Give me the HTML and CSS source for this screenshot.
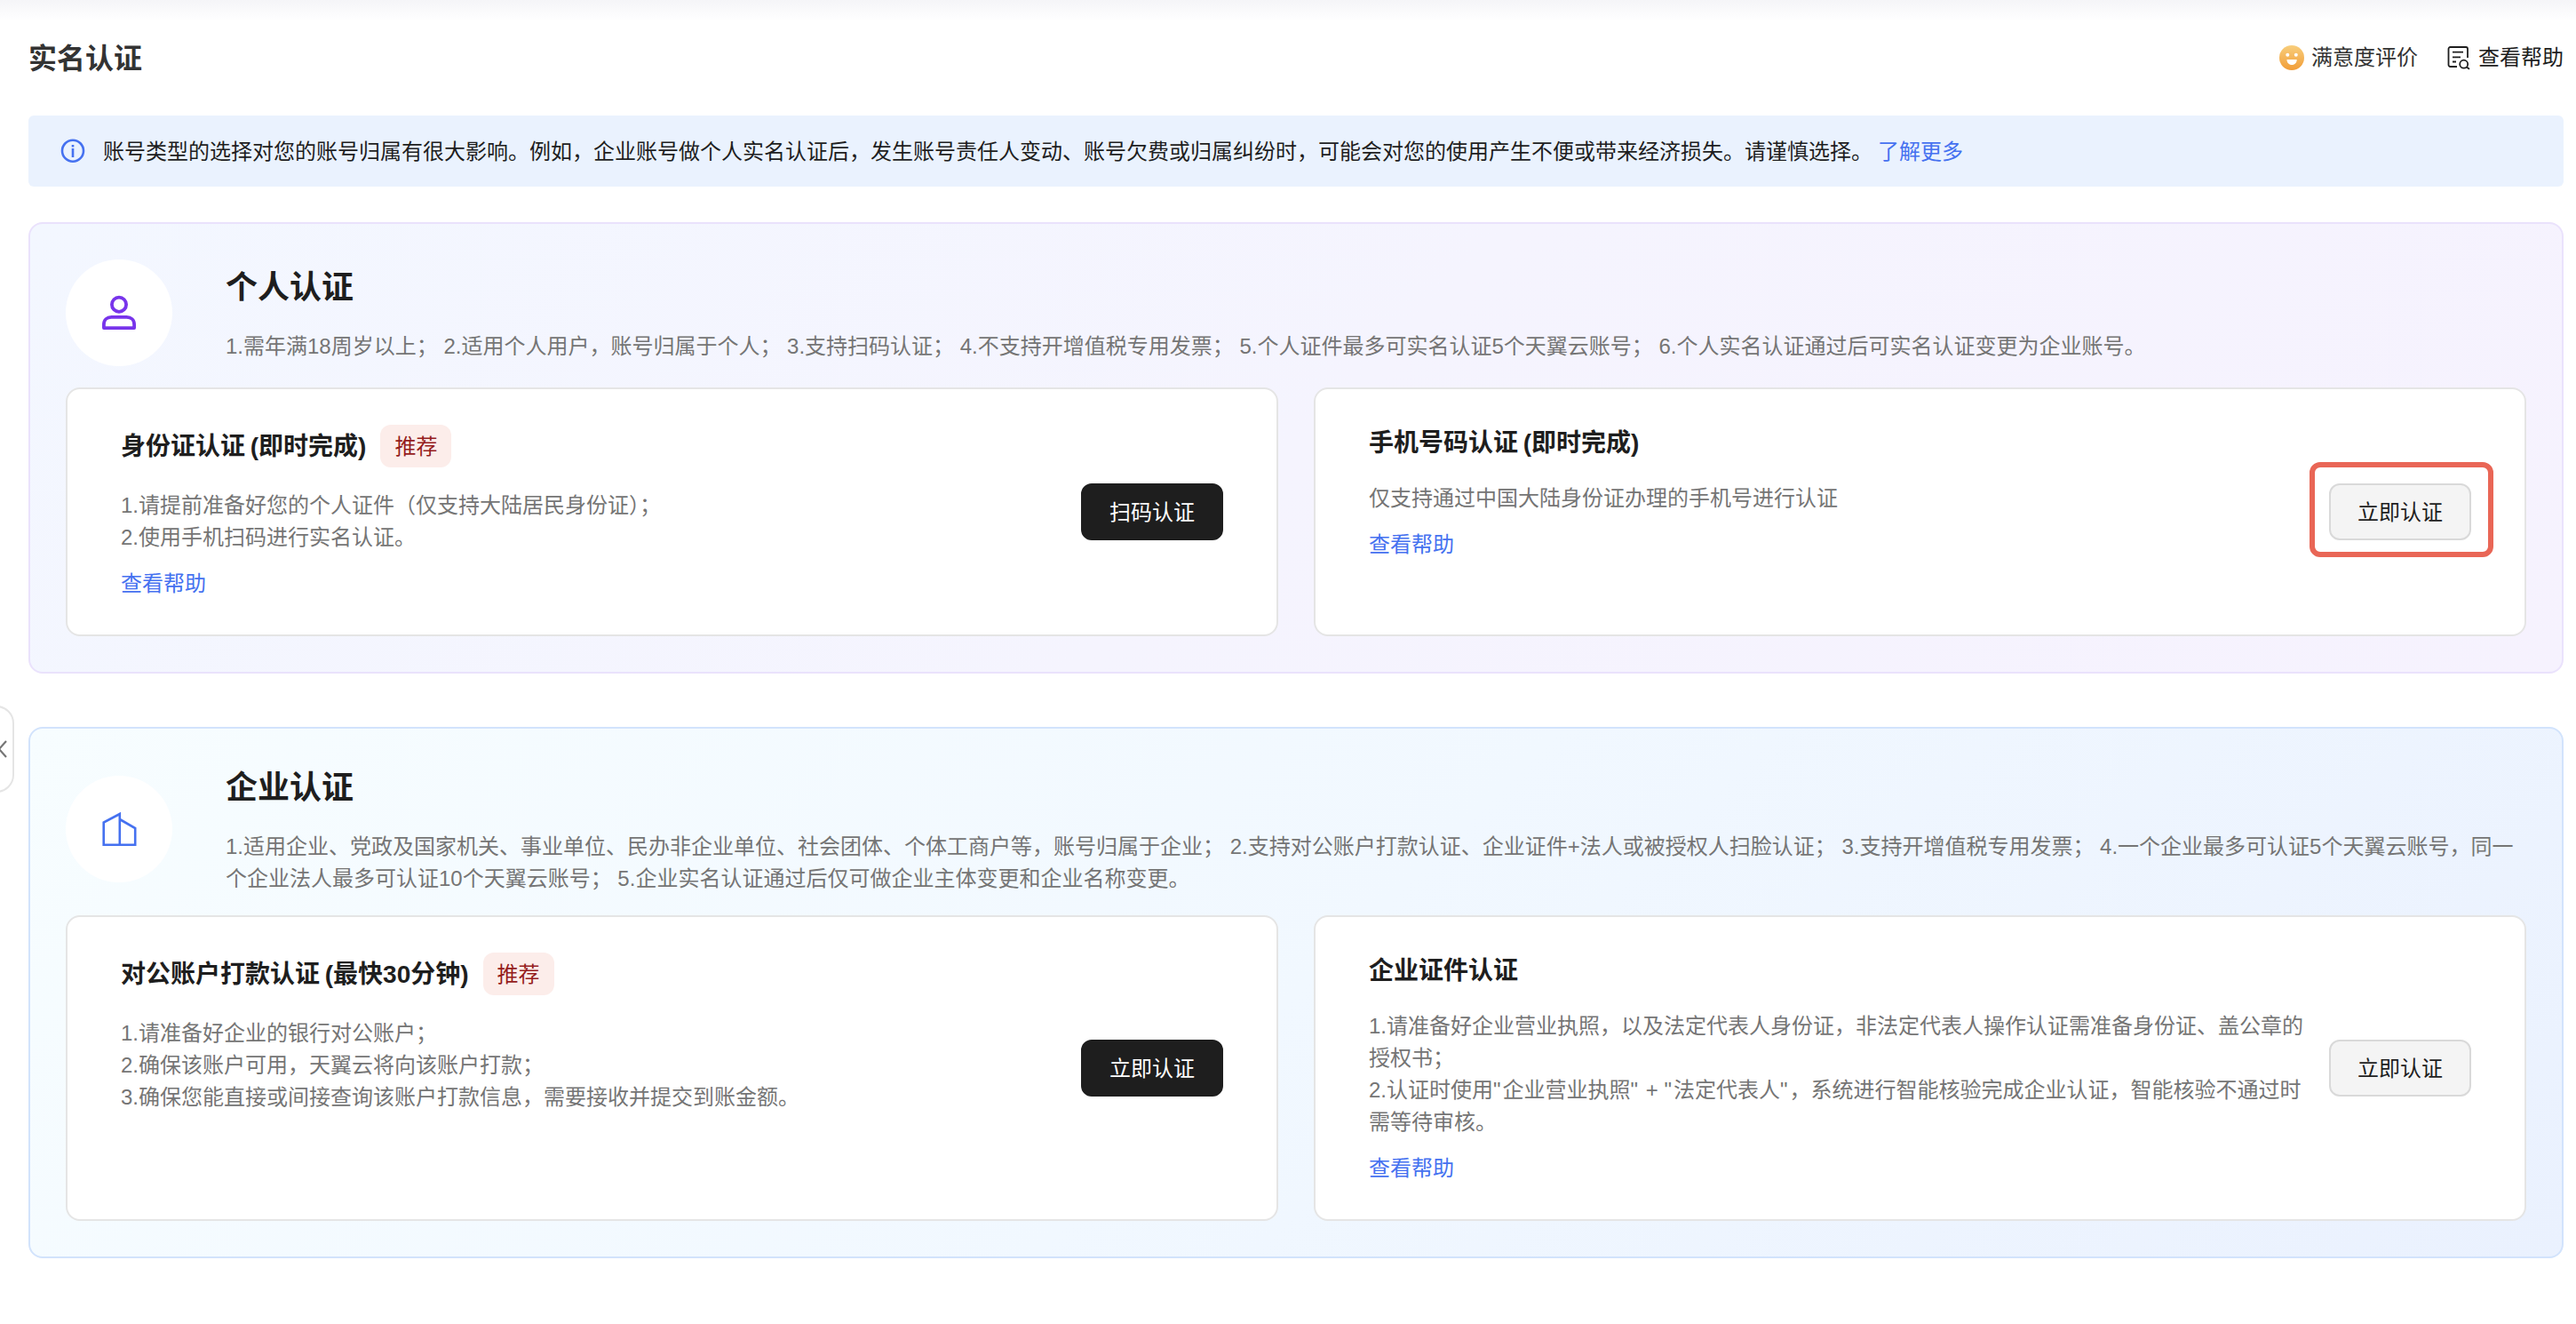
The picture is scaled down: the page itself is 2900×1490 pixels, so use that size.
FILE: index.html
```html
<!DOCTYPE html>
<html lang="zh-CN">
<head>
    <meta charset="UTF-8">
    <meta name="viewport" content="width=device-width, initial-scale=1.0">
    <title>实名认证</title>
    <link rel="stylesheet" href="styles.css">
</head>
<body>
    <!-- 侧边栏收起按钮 -->
    <div class="collapse-btn">
        <svg width="10" height="20" viewBox="0 0 10 20"><path d="M9 1L1 10l8 9"/></svg>
    </div>

    <div class="page-header">
        <h1>实名认证</h1>
        <div class="header-links">
            <a href="#" class="rate-link">
                <svg width="28" height="28" viewBox="0 0 28 28">
                    <defs>
                        <linearGradient id="face" x1="0" y1="0" x2="0" y2="1">
                            <stop offset="0" stop-color="#f8ce7c"/>
                            <stop offset="1" stop-color="#f19d38"/>
                        </linearGradient>
                    </defs>
                    <circle cx="14" cy="14" r="14" fill="url(#face)"/>
                    <circle cx="9.3" cy="10.7" r="2" fill="#fff"/>
                    <circle cx="18.8" cy="10.7" r="2" fill="#fff"/>
                    <path d="M8.5 16h11.2c0 3.6-2.3 6-5.6 6s-5.6-2.4-5.6-6z" fill="#fff"/>
                </svg>
                <span>满意度评价</span>
            </a>
            <a href="#" class="help-link">
                <svg width="28" height="28" viewBox="0 0 28 28" fill="none" stroke="#1e1e1e" stroke-width="1.8">
                    <path d="M12 24H4.500a2 2 0 0 1-2-2V4a2 2 0 0 1 2-2H22a2 2 0 0 1 2 2v10"/>
                    <path d="M7 7.700h12M7 13.300h9M7 18.500h4"/>
                    <circle cx="19.700" cy="21.200" r="4.500"/>
                    <path d="M23 24.500l3 2.200"/>
                </svg>
                <span>查看帮助</span>
            </a>
        </div>
    </div>

    <div class="alert">
        <svg width="28" height="28" viewBox="0 0 28 28" fill="none" stroke="#4571f0" stroke-width="2.6">
            <circle cx="14" cy="13.700" r="12"/>
            <path d="M14 11v10M14 7v2.500"/>
        </svg>
        <p>账号类型的选择对您的账号归属有很大影响。例如，企业账号做个人实名认证后，发生账号责任人变动、账号欠费或归属纠纷时，可能会对您的使用产生不便或带来经济损失。请谨慎选择。<a href="#">了解更多</a></p>
    </div>

    <!-- 个人认证 -->
    <div class="panel personal">
        <div class="panel-header">
            <div class="panel-icon">
                <svg width="44" height="44" viewBox="0 0 44 44" fill="none" stroke="#7834eb" stroke-width="3.8">
                    <circle cx="22" cy="12.700" r="8.100"/>
                    <path d="M4.900 39.100V35c0-5 3.600-8.200 8.500-8.200h17.200c4.900 0 8.500 3.200 8.500 8.200v4.100z" stroke-linejoin="round"/>
                </svg>
            </div>
            <div class="panel-text">
                <h2>个人认证</h2>
                <p>1.需年满18周岁以上； 2.适用个人用户，账号归属于个人； 3.支持扫码认证； 4.不支持开增值税专用发票； 5.个人证件最多可实名认证5个天翼云账号； 6.个人实名认证通过后可实名认证变更为企业账号。</p>
            </div>
        </div>
        <div class="cards">
            <div class="card">
                <div class="card-body">
                    <h3>身份证认证 (即时完成)<span class="tag">推荐</span></h3>
                    <p>1.请提前准备好您的个人证件（仅支持大陆居民身份证）；<br>2.使用手机扫码进行实名认证。</p>
                    <a href="#">查看帮助</a>
                </div>
                <button class="btn primary">扫码认证</button>
            </div>
            <div class="card">
                <div class="card-body">
                    <h3>手机号码认证 (即时完成)</h3>
                    <p>仅支持通过中国大陆身份证办理的手机号进行认证</p>
                    <a href="#">查看帮助</a>
                </div>
                <button class="btn marked">立即认证</button>
            </div>
        </div>
    </div>

    <!-- 企业认证 -->
    <div class="panel company">
        <div class="panel-header">
            <div class="panel-icon">
                <svg width="44" height="44" viewBox="0 0 44 44" fill="none" stroke="#4571f0" stroke-width="2.6">
                    <path d="M22.800 39.700V5L4.700 14.500v25.200h35.500V21L22.800 11"/>
                </svg>
            </div>
            <div class="panel-text">
                <h2>企业认证</h2>
                <p>1.适用企业、党政及国家机关、事业单位、民办非企业单位、社会团体、个体工商户等，账号归属于企业； 2.支持对公账户打款认证、企业证件+法人或被授权人扫脸认证； 3.支持开增值税专用发票； 4.一个企业最多可认证5个天翼云账号，同一<br>个企业法人最多可认证10个天翼云账号； 5.企业实名认证通过后仅可做企业主体变更和企业名称变更。</p>
            </div>
        </div>
        <div class="cards">
            <div class="card">
                <div class="card-body">
                    <h3>对公账户打款认证 (最快30分钟)<span class="tag">推荐</span></h3>
                    <p>1.请准备好企业的银行对公账户；<br>2.确保该账户可用，天翼云将向该账户打款；<br>3.确保您能直接或间接查询该账户打款信息，需要接收并提交到账金额。</p>
                </div>
                <button class="btn primary">立即认证</button>
            </div>
            <div class="card">
                <div class="card-body">
                    <h3>企业证件认证</h3>
                    <p>1.请准备好企业营业执照，以及法定代表人身份证，非法定代表人操作认证需准备身份证、盖公章的<br>授权书；<br>2.认证时使用<span class="quote">"</span>企业营业执照<span class="quote">"</span> + <span class="quote">"</span>法定代表人<span class="quote">"</span>，系统进行智能核验完成企业认证，智能核验不通过时<br>需等待审核。</p>
                    <a href="#">查看帮助</a>
                </div>
                <button class="btn">立即认证</button>
            </div>
        </div>
    </div>
</body>
</html>
```

FILE: styles.css
```css
/* 基本样式 */
*, *::after { box-sizing: border-box; }
body { margin: 0; padding: 0 14px 0 32px; min-height: 100vh; background: linear-gradient(#f5f5f8, #fff 24px) no-repeat #fff; color: #1e1e1e; font-family: "Liberation Sans", Arial, "Noto Sans CJK SC", sans-serif; font-size: 24px; line-height: 36px; }
h1, h2, h3, p { margin: 0; }
a { color: #4571f0; text-decoration: none; }
svg { display: block; flex-shrink: 0; }

/* 页面标题 */
.page-header { display: flex; justify-content: space-between; align-items: center; height: 130px; }
.page-header h1 { padding-top: 2px; font-size: 32px; line-height: 48px; color: #333; }
.header-links { display: flex; gap: 32px; }
.header-links a { display: flex; align-items: center; gap: 8px; color: #1e1e1e; }
.header-links .rate-link { color: #333; }

/* 提示条 */
.alert { display: flex; align-items: center; height: 80px; margin-bottom: 40px; padding: 0 36px; background-color: #eaf2fe; border-radius: 6px; }
.alert p { margin-left: 20px; padding-top: 2px; }
.alert a { margin-left: 6px; }

/* 认证面板 */
.panel { padding: 40px; border: 2px solid; border-radius: 16px; margin-bottom: 60px; }
.panel.personal { background: linear-gradient(135deg, #f3f7ff, #f5f4fe 50%, #f6f2fe); border-color: #eae2fc; }
.panel.company { background: linear-gradient(135deg, #f7fdff, #f1f8ff 50%, #eaf1fe); border-color: #d2e3fc; margin-bottom: 0; }
.panel-header { display: flex; align-items: center; margin-bottom: 24px; }
.panel-icon { display: flex; align-items: center; justify-content: center; flex-shrink: 0; width: 120px; height: 120px; border-radius: 50%; background-color: #fff; margin-right: 60px; }
.panel-text { margin-bottom: -1px; }
.panel-text h2 { padding-top: 3px; font-size: 36px; line-height: 48px; margin-bottom: 24px; }
.panel-text p { color: #757575; white-space: nowrap; }

/* 认证方式卡片 */
.cards { display: grid; grid-template-columns: 1fr 1fr; gap: 40px; }
.card { display: flex; justify-content: space-between; align-items: center; min-width: 0; padding: 40px 60px; background-color: #fff; border: 2px solid #e5e5e5; border-radius: 16px; }
.card-body { align-self: flex-start; min-width: 0; margin-bottom: -1px; }
.card h3 { display: flex; align-items: center; padding-top: 2px; font-size: 28px; line-height: 38px; word-spacing: -2px; margin-bottom: 25px; }
.card p { color: #757575; white-space: nowrap; }
.card .quote { letter-spacing: 2px; }
.card-body > a { display: block; margin-top: 16px; }
.tag { margin: -2px 0 0 16px; padding: 2px 16px 0; background-color: #fcedea; color: #951d1d; border-radius: 12px; font-size: 24px; font-weight: normal; line-height: 46px; }

/* 按钮 */
.btn { position: relative; flex-shrink: 0; width: 160px; height: 64px; padding: 0 0 4px; border: 2px solid #d9d9d9; border-radius: 12px; background-color: #f4f4f4; color: #1e1e1e; font-family: inherit; font-size: 24px; cursor: pointer; }
.btn.primary { background-color: #1e1e1e; border-color: #1e1e1e; color: #fff; }
.btn.marked::after { content: ""; position: absolute; left: -24px; top: -26px; width: 207px; height: 107px; border: 6px solid #e96656; border-radius: 12px; }

/* 侧边栏收起按钮 */
.collapse-btn { position: absolute; left: -24px; top: 794px; display: flex; align-items: center; justify-content: flex-end; width: 40px; height: 98px; padding-right: 6px; border: 2px solid #e5e5e5; border-radius: 22px; background-color: #fff; }
.collapse-btn svg { fill: none; stroke: #757575; stroke-width: 2.2; }
```
